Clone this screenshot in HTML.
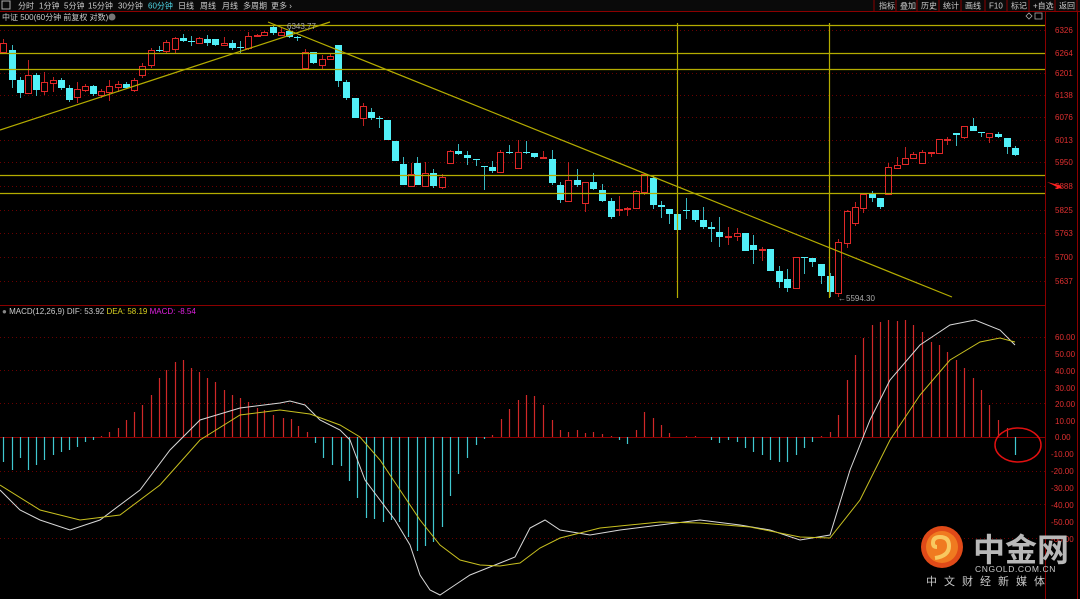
<!DOCTYPE html>
<html><head><meta charset="utf-8"><style>
body{margin:0;background:#000;width:1080px;height:599px;overflow:hidden;font-family:"Liberation Sans","Noto Sans CJK SC",sans-serif}
svg{display:block}
text{font-family:"Liberation Sans","Noto Sans CJK SC",sans-serif}
</style></head><body>
<svg id="s" width="1080" height="599" xmlns="http://www.w3.org/2000/svg">
<rect width="1080" height="599" fill="#000"/>
<rect x="0" y="0" width="1080" height="11" fill="#0a0a0a"/>
<line x1="0" y1="11.5" x2="1080" y2="11.5" stroke="#8b0000"/>
<rect x="2" y="1" width="8" height="8" fill="none" stroke="#aaa" stroke-width="1"/>
<g font-size="8" fill="#ccc">
<text x="18" y="8.5">分时</text><text x="39" y="8.5">1分钟</text><text x="64" y="8.5">5分钟</text><text x="88" y="8.5">15分钟</text><text x="118" y="8.5">30分钟</text>
<text x="148" y="8.5" fill="#4fd8e8">60分钟</text><text x="178" y="8.5">日线</text><text x="200" y="8.5">周线</text><text x="222" y="8.5">月线</text><text x="243" y="8.5">多周期</text><text x="271" y="8.5">更多 ›</text>
</g>
<g font-size="8" fill="#ccc" id="btns"></g>
<text x="2" y="20" font-size="8" fill="#ccc">中证 500(60分钟 前复权 对数)</text>
<circle cx="112" cy="17" r="3.5" fill="#777"/>
<line x1="1045.5" y1="12" x2="1045.5" y2="599" stroke="#8b0000"/>
<line x1="1077.5" y1="12" x2="1077.5" y2="599" stroke="#8b0000"/>
<line x1="0" y1="305.5" x2="1045" y2="305.5" stroke="#8b0000"/>
<path d="M1026 16 l3 -3 l3 3 l-3 3z" fill="none" stroke="#aaa" stroke-width="0.8"/>
<rect x="1035" y="13" width="7" height="6" fill="none" stroke="#aaa" stroke-width="0.8"/>
<g id="grid"></g>
<g id="main"></g>
<g id="macd"></g>
<g stroke="#b4ac00" stroke-width="1.2" fill="none">
<line x1="0" y1="25.5" x2="1045" y2="25.5"/>
<line x1="0" y1="53.5" x2="1045" y2="53.5"/>
<line x1="0" y1="69.5" x2="1045" y2="69.5"/>
<line x1="0" y1="175.5" x2="1045" y2="175.5"/>
<line x1="0" y1="193.5" x2="1045" y2="193.5"/>
<line x1="677.5" y1="23" x2="677.5" y2="298"/>
<line x1="829.5" y1="23" x2="829.5" y2="298"/>
<line x1="0" y1="130" x2="330" y2="22"/>
<line x1="268" y1="22" x2="952" y2="297"/>
</g>
<text x="287" y="29" font-size="8" fill="#aaa">6343.77</text>
<text x="838" y="301" font-size="8" fill="#aaa">←5594.30</text>
<path d="M1047 182 l12 3 l-2 -3 l5 6 l-7 1 l2 -2z" fill="#ff2020"/>
<text x="2" y="314" font-size="8" fill="#ccc"><tspan fill="#888">●</tspan> MACD(12,26,9)  DIF: 53.92  <tspan fill="#d8d020">DEA: 58.19</tspan>  <tspan fill="#e020e0">MACD: -8.54</tspan></text>
<ellipse cx="1018" cy="445" rx="23" ry="17" fill="none" stroke="#e01010" stroke-width="1.5"/>
<circle cx="942" cy="547" r="21" fill="#e04a18"/>
<circle cx="942" cy="547" r="16" fill="#f07a20"/>
<path d="M935 558 q14 -2 14 -12 q0 -9 -9 -9 q-7 0 -7 6 q0 4 4 4" fill="none" stroke="#f8c860" stroke-width="4"/>
<text x="973" y="561" font-size="32" font-weight="bold" fill="#b8b8b8">中金网</text>
<text x="975" y="572" font-size="8.5" fill="#c8c8c8" letter-spacing="0.6">CNGOLD.COM.CN</text>
<text x="926" y="585" font-size="11" fill="#c8c8c8" letter-spacing="7">中文财经新媒体</text>
</svg>
<script>
var NS="http://www.w3.org/2000/svg";
function el(p,t,a,txt){var e=document.createElementNS(NS,t);for(var k in a)e.setAttribute(k,a[k]);if(txt)e.textContent=txt;p.appendChild(e);return e;}
var b=document.getElementById('btns');
var names=["指标","叠加","历史","统计","画线","F10","标记","+自选","返回"];
var bx=[876,897,918,940,962,986,1008,1030,1056];
el(b,'line',{x1:874,y1:0,x2:874,y2:11,stroke:'#8b0000'});
names.forEach(function(n,i){el(b,'text',{x:bx[i]+3,y:8.5},n);el(b,'line',{x1:(bx[i+1]||1078)-1,y1:0,x2:(bx[i+1]||1078)-1,y2:11,stroke:'#8b0000'});});
var g=document.getElementById('grid');
var labs=[["6326",30],["6264",53],["6201",73],["6138",95],["6076",117],["6013",140],["5950",162],["5888",186],["5825",210],["5763",233],["5700",257],["5637",281]];
labs.forEach(function(l){el(g,'line',{x1:0,y1:l[1]+.5,x2:1045,y2:l[1]+.5,stroke:'#6a0000','stroke-dasharray':'1,3'});el(g,'text',{x:1055,y:l[1]+3,'font-size':8,fill:'#e03030'},l[0]);});
var ml=[["60.00",337],["50.00",354],["40.00",371],["30.00",388],["20.00",404],["10.00",421],["0.00",437],["-10.00",454],["-20.00",471],["-30.00",488],["-40.00",505],["-50.00",522],["-60.00",539]];
ml.forEach(function(l){el(g,'text',{x:l[0][0]=='-'?1051:1055,y:l[1]+3,'font-size':8,fill:'#e03030'},l[0]);});
[337,370,403,437,471,504,538].forEach(function(y){el(g,'line',{x1:0,y1:y+.5,x2:1045,y2:y+.5,stroke:'#6a0000','stroke-dasharray':'1,3'});});
var C=[[3,'r',43,52,39,52],[12,'c',50,80,45,88],[20,'c',80,93,77,98],[28,'r',75,93,60,93],[36,'c',75,90,73,96],[44,'r',82,91,72,95],[53,'r',80,83,77,92],[61,'c',80,88,78,90],[69,'c',88,100,85,102],[77,'r',89,97,82,103],[85,'r',86,90,84,92],[93,'c',86,94,85,96],[101,'r',91,95,89,98],[109,'r',86,92,80,101],[118,'r',84,87,81,92],[126,'c',84,88,82,89],[134,'r',80,90,78,92],[142,'r',66,75,63,78],[151,'r',50,65,48,68],[159,'c',50,51,46,52],[166,'r',42,51,40,54],[175,'r',38,49,37,53],[183,'c',38,41,34,42],[191,'c',41,42,36,46],[199,'r',38,43,37,44],[207,'c',39,43,35,46],[215,'c',39,45,39,46],[224,'r',43,45,37,46],[232,'c',43,48,40,50],[240,'c',47,48,41,54],[248,'r',36,48,32,50],[257,'r',35,36,34,37],[264,'r',32,35,31,36],[273,'c',27,33,26,35],[281,'r',32,35,28,36],[289,'c',31,37,29,38],[297,'c',37,38,36,41],[305,'r',52,68,49,70],[313,'c',52,63,52,64],[322,'r',59,65,55,70],[330,'r',56,59,53,60],[338,'c',45,81,45,87],[346,'c',82,98,80,100],[355,'c',98,118,98,118],[363,'r',106,118,103,126],[371,'c',112,118,108,120],[379,'c',118,119,116,128],[387,'c',120,140,120,140],[395,'c',141,161,141,161],
[417,'c',163,185,157,185],[425,'r',173,186,162,186],[433,'c',173,186,169,188],[442,'r',177,187,174,189],[450,'r',151,163,150,164],[458,'c',151,154,144,155],[467,'c',155,158,151,165],[476,'c',159,160,159,166],[484,'c',166,167,166,190],[492,'c',167,171,161,173],[500,'r',152,172,150,173],[509,'c',152,153,145,154],[518,'r',152,168,140,169],[526,'c',152,153,141,154],[534,'c',153,157,153,158],[543,'r',157,158,151,159],[552,'c',159,183,150,185],[560,'c',185,200,182,203],[568,'r',180,201,162,202],[577,'c',180,185,169,187],[585,'r',182,203,182,212],[593,'c',182,189,173,190],[602,'c',190,201,184,202],[611,'c',201,217,198,219],[619,'r',209,210,196,216],[627,'r',208,209,207,216],[636,'r',191,208,190,209],[644,'r',174,192,173,195],[653,'c',178,205,176,209],[661,'c',205,207,201,218],[669,'c',209,214,209,224],[677,'c',214,230,208,232],[686,'c',210,211,198,219],[695,'c',210,220,210,222],[703,'c',220,227,207,229],[711,'c',227,229,222,242],[719,'c',232,237,217,247],[728,'r',236,237,227,245],[737,'r',233,236,228,241],[745,'c',233,251,233,251],[753,'c',245,250,235,264],[762,'r',249,250,247,261],[770,'c',249,271,249,271],[779,'c',271,282,266,288],[787,'c',279,288,269,292],[796,'r',257,288,257,288],[804,'c',257,258,257,274],[812,'c',258,262,258,267],[821,'c',264,276,264,284],[830,'c',276,292,273,297],[838,'r',242,293,239,297],[847,'r',211,243,210,248],[855,'r',207,223,202,226],[863,'r',194,208,194,213],[872,'c',193,198,191,202],[880,'c',198,207,198,209],[888,'r',167,194,163,194],[897,'r',165,168,157,168],[905,'r',158,164,147,165],[913,'r',154,158,152,159],[922,'r',152,163,150,164],[931,'r',152,153,152,157],[939,'r',139,153,139,153],[947,'r',139,140,137,145],[956,'c',133,135,133,146],[964,'r',126,137,126,139],[973,'c',126,131,118,131],[981,'c',132,133,132,137],[989,'r',133,137,133,143],[998,'c',134,137,132,138],[1007,'c',138,147,138,154],[1015,'c',148,155,146,156],[403,'c',164,185,157,185],[411,'r',174,186,163,186]];
var m=document.getElementById('main');
C.forEach(function(c){var x=c[0],col=c[1]=='r'?'#e02828':'#52f0f8';
el(m,'line',{x1:x+.5,y1:c[4],x2:x+.5,y2:c[5],stroke:c[1]=='r'?'#c02020':'#3ab8c0'});
var h=Math.max(1,c[3]-c[2]);
if(c[1]=='r'){el(m,'rect',{x:x-2.5,y:c[2]+.5,width:6,height:h,fill:'#000',stroke:col});}
else el(m,'rect',{x:x-3,y:c[2],width:7,height:h,fill:col});});
var K=[[3,462],[12,470],[20,458],[28,470],[36,465],[44,460],[53,455],[61,452],[69,450],[77,447],[85,442],[93,440],[101,436],[109,432],[118,428],[126,420],[134,412],[142,405],[151,395],[159,378],[166,370],[175,362],[183,360],[191,368],[199,372],[207,378],[215,382],[224,390],[232,395],[240,398],[248,402],[257,408],[264,410],[273,415],[283,418],[291,419],[298,426],[307,432],[315,443],[323,458],[332,465],[341,466],[349,481],[357,498],[366,518],[374,519],[383,522],[391,520],[399,522],[408,537],[417,551],[425,546],[433,542],[442,527],[450,496],[458,474],[467,458],[476,445],[484,439],[492,435],[501,419],[509,409],[518,400],[526,395],[534,396],[543,405],[552,420],[560,430],[568,432],[577,430],[585,433],[593,432],[602,434],[611,436],[619,440],[627,444],[636,430],[644,412],[653,418],[661,425],[669,433],[677,437],[686,436],[695,436],[703,437],[711,440],[719,443],[728,440],[737,442],[745,448],[753,452],[762,455],[770,460],[779,462],[787,462],[796,455],[804,448],[812,442],[821,436],[830,432],[838,415],[847,380],[855,355],[863,338],[872,325],[880,322],[888,320],[897,321],[905,320],[913,325],[922,332],[931,342],[939,345],[947,352],[956,360],[964,368],[973,378],[981,390],[989,405],[998,420],[1007,428],[1015,455]];
var mc=document.getElementById('macd');
el(mc,'line',{x1:0,y1:437.5,x2:1045,y2:437.5,stroke:'#8b0000'});
K.forEach(function(k){var up=k[1]<437;el(mc,'line',{x1:k[0]+.5,y1:437,x2:k[0]+.5,y2:k[1],stroke:up?'#d02828':'#40c8d0','stroke-width':1.2});});
var W=[[0,490],[20,510],[40,520],[70,530],[100,520],[140,490],[170,450],[200,420],[240,408],[280,403],[290,401],[305,405],[320,420],[340,430],[350,440],[365,480],[380,500],[395,520],[410,545],[420,575],[430,590],[440,595],[455,585],[470,575],[490,567],[515,557],[530,528],[545,520],[560,530],[590,535],[620,530],[660,525],[700,520],[740,525],[770,530],[800,540],[830,535],[850,470],[870,420],[890,380],[920,345],[950,325],[975,320],[1000,330],[1015,345]];
var Y=[[0,485],[40,510],[80,520],[120,515],[160,485],[200,440],[240,415],[280,410],[310,414],[340,425],[360,437],[380,460],[400,490],[420,520],[440,545],[460,560],[480,565],[500,566],[520,563],[540,548],[560,538],[600,528],[660,522],[700,523],[750,527],[800,537],[830,538],[860,500],[890,440],[920,395],[950,360],[980,342],[1000,338],[1015,342]];
function pl(a,c){el(mc,'polyline',{points:a.map(function(p){return p.join(',')}).join(' '),fill:'none',stroke:c,'stroke-width':1});}
pl(W,'#d8d8d8');pl(Y,'#c8c020');
</script>
</body></html>
